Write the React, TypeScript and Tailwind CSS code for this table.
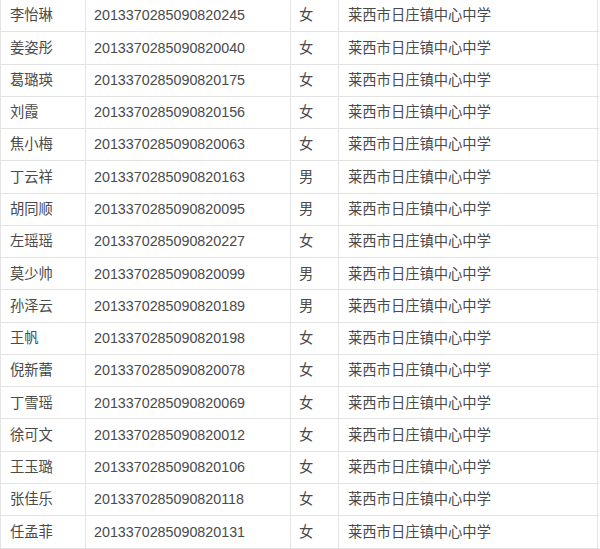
import React from "react";

const rows: [string, string, string][] = [
  ["李怡琳", "2013370285090820245", "女"],
  ["姜姿彤", "2013370285090820040", "女"],
  ["葛璐瑛", "2013370285090820175", "女"],
  ["刘霞", "2013370285090820156", "女"],
  ["焦小梅", "2013370285090820063", "女"],
  ["丁云祥", "2013370285090820163", "男"],
  ["胡同顺", "2013370285090820095", "男"],
  ["左瑶瑶", "2013370285090820227", "女"],
  ["莫少帅", "2013370285090820099", "男"],
  ["孙泽云", "2013370285090820189", "男"],
  ["王帆", "2013370285090820198", "女"],
  ["倪新蕾", "2013370285090820078", "女"],
  ["丁雪瑶", "2013370285090820069", "女"],
  ["徐可文", "2013370285090820012", "女"],
  ["王玉璐", "2013370285090820106", "女"],
  ["张佳乐", "2013370285090820118", "女"],
  ["任孟菲", "2013370285090820131", "女"],
];

export default function App() {
  return (
    <div
      className="w-[600px] h-[549px] overflow-hidden bg-white text-[14.3px] text-[#4a4a4a]"
      style={{ fontFamily: '"Liberation Sans", Arial, "Noto Sans CJK SC", sans-serif' }}
    >
      <div className="w-[599px] border-l border-[#e3e3e3]">
        {rows.map(([name, id, sex], i) => (
          <div
            key={i}
            className="grid grid-cols-[85px_205px_48px_259px] h-[32.27px] border-b border-[#e3e3e3]"
          >
            <div className="flex items-center pl-[9px] pt-[1px] border-r border-[#e3e3e3]">{name}</div>
            <div className="flex items-center pl-[8px] pt-[1px] border-r border-[#e3e3e3]">{id}</div>
            <div className="flex items-center pl-[8px] pt-[1px] border-r border-[#e3e3e3]">{sex}</div>
            <div className="flex items-center pl-[9px] pt-[1px] border-r border-[#e3e3e3]">莱西市日庄镇中心中学</div>
          </div>
        ))}
      </div>
    </div>
  );
}
